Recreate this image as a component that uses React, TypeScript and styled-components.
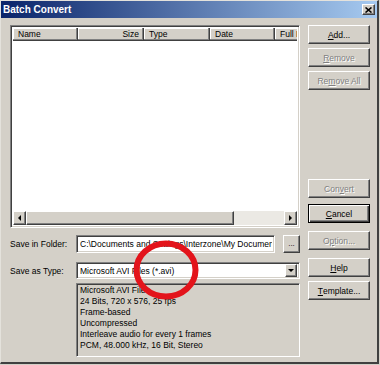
import styled, { createGlobalStyle } from "styled-components";

const GlobalStyle = createGlobalStyle`
  html, body {
    margin: 0;
    padding: 0;
    background: #d4d0c8;
  }
  body {
    font-family: "Liberation Sans", Arial, sans-serif;
    font-size: 8.5px;
    color: #000;
  }
  * {
    box-sizing: border-box;
  }
`;

const face = "#d4d0c8";
const raised = `
  border: 1px solid;
  border-color: #ffffff #404040 #404040 #ffffff;
  box-shadow: inset -1px -1px #808080, inset 1px 1px ${face};
  background: ${face};
`;
const sunken = `
  border: 1px solid;
  border-color: #808080 #ffffff #ffffff #808080;
  box-shadow: inset 1px 1px #404040, inset -1px -1px ${face};
`;

const Window = styled.div`
  position: relative;
  width: 379px;
  height: 364px;
  background: ${face};
  border-top: 1px solid #e4e2dc;
  border-left: 1px solid #e4e2dc;
  border-right: 2px solid #404040;
  border-bottom: 2px solid #404040;
  display: flex;
  flex-direction: column;
  overflow: hidden;
`;

const TitleBar = styled.div`
  height: 17px;
  display: flex;
  align-items: center;
  justify-content: space-between;
  padding: 0 2px 0 2px;
  background: linear-gradient(to right, #0a246a, #a6caf0);
`;

const Title = styled.span`
  color: #fff;
  font-weight: bold;
  font-size: 10px;
`;

const CloseButton = styled.div`
  ${raised}
  width: 13px;
  height: 11px;
  display: flex;
  align-items: center;
  justify-content: center;
`;

const Content = styled.div`
  flex: 1;
  display: flex;
  gap: 8px;
  padding: 7px 0 0 9px;
`;

const LeftCol = styled.div`
  width: 290px;
  display: flex;
  flex-direction: column;
`;

const ButtonCol = styled.div`
  width: 62px;
  display: flex;
  flex-direction: column;
`;

const ListView = styled.div`
  ${sunken}
  height: 203px;
  background: #fff;
  padding: 2px;
  display: flex;
  flex-direction: column;
`;

const HeaderRow = styled.div`
  height: 13px;
  display: flex;
  overflow: hidden;
`;

const HeaderCell = styled.div<{ $w: number; $right?: boolean }>`
  flex: 0 0 ${(p) => p.$w}px;
  height: 13px;
  background: ${face};
  border-right: 1px solid #404040;
  border-bottom: 1px solid #404040;
  box-shadow: inset -1px -1px #808080, inset 1px 1px #ffffff;
  display: flex;
  align-items: center;
  justify-content: ${(p) => (p.$right ? "flex-end" : "flex-start")};
  padding: 0 4px 0 5px;
  white-space: nowrap;
  overflow: hidden;
`;

const ListBody = styled.div`
  flex: 1;
`;

const ScrollBar = styled.div`
  height: 14px;
  display: flex;
  background: #ebe9e4;
`;

const ScrollArrow = styled.div`
  ${raised}
  width: 13px;
  height: 14px;
  display: flex;
  align-items: center;
  justify-content: center;
`;

const Thumb = styled.div`
  ${raised}
  width: 208px;
  height: 14px;
`;

const Track = styled.div`
  flex: 1;
`;

const Triangle = styled.span<{ $dir: "left" | "right" | "down" }>`
  width: 0;
  height: 0;
  border-style: solid;
  ${(p) =>
    p.$dir === "left"
      ? "border-width: 3.5px 3.5px 3.5px 0; border-color: transparent #000 transparent transparent;"
      : p.$dir === "right"
      ? "border-width: 3.5px 0 3.5px 3.5px; border-color: transparent transparent transparent #000;"
      : "border-width: 3.5px 3.5px 0 3.5px; border-color: #000 transparent transparent transparent;"}
`;

const FormRow = styled.div<{ $mt: number }>`
  display: flex;
  align-items: center;
  margin-top: ${(p) => p.$mt}px;
`;

const Label = styled.div`
  width: 66px;
  white-space: nowrap;
`;

const TextBox = styled.div<{ $w: number; $h: number }>`
  ${sunken}
  width: ${(p) => p.$w}px;
  height: ${(p) => p.$h}px;
  background: #fff;
  display: flex;
  align-items: center;
  padding: 0 2px 0 3px;
  white-space: nowrap;
  overflow: hidden;
`;

const BoxText = styled.span`
  flex: 1;
  overflow: hidden;
`;

const DropButton = styled.div`
  ${raised}
  flex: 0 0 12px;
  height: 13px;
  display: flex;
  align-items: center;
  justify-content: center;
`;

const SmallButton = styled.div`
  ${raised}
  width: 17px;
  height: 18px;
  margin-left: 8px;
  display: flex;
  align-items: flex-end;
  justify-content: center;
  padding-bottom: 4px;
  font-size: 8px;
`;

const InfoBox = styled.div`
  ${sunken}
  margin: 4px 0 0 66px;
  width: 224px;
  height: 74px;
  padding: 1px 3px;
  line-height: 10.9px;
  white-space: nowrap;
  overflow: hidden;
`;

const Button = styled.div<{ $mt: number; $disabled?: boolean; $default?: boolean }>`
  ${raised}
  margin-top: ${(p) => p.$mt}px;
  height: 19px;
  display: flex;
  align-items: center;
  justify-content: center;
  white-space: nowrap;
  color: ${(p) => (p.$disabled ? "#808080" : "#000")};
  text-shadow: ${(p) => (p.$disabled ? "1px 1px #ffffff" : "none")};
  ${(p) =>
    p.$default
      ? `border-color: #000; box-shadow: inset 1px 1px #ffffff, inset -1px -1px #404040, inset -2px -2px #808080;`
      : ""}
`;

const Annotation = styled.svg`
  position: absolute;
  left: 131px;
  top: 238px;
  pointer-events: none;
`;

const info = [
  "Microsoft AVI Files",
  "24 Bits, 720 x 576, 25 fps",
  "Frame-based",
  "Uncompressed",
  "Interleave audio for every 1 frames",
  "PCM, 48.000 kHz, 16 Bit, Stereo",
];

const folder = "C:\\Documents and Settings\\Interzone\\My Documents";

export default function App() {
  return (
    <>
      <GlobalStyle />
      <Window>
        <TitleBar>
          <Title>Batch Convert</Title>
          <CloseButton>
            <svg width="7" height="6" viewBox="0 0 7 6">
              <path d="M0.5 0.5 L6.5 5.5 M6.5 0.5 L0.5 5.5" stroke="#000" strokeWidth="1.6" />
            </svg>
          </CloseButton>
        </TitleBar>
        <Content>
          <LeftCol>
            <ListView>
              <HeaderRow>
                <HeaderCell $w={65}>Name</HeaderCell>
                <HeaderCell $w={66} $right>Size</HeaderCell>
                <HeaderCell $w={66}>Type</HeaderCell>
                <HeaderCell $w={65}>Date</HeaderCell>
                <HeaderCell $w={60}>Full Path</HeaderCell>
              </HeaderRow>
              <ListBody />
              <ScrollBar>
                <ScrollArrow>
                  <Triangle $dir="left" />
                </ScrollArrow>
                <Thumb />
                <Track />
                <ScrollArrow>
                  <Triangle $dir="right" />
                </ScrollArrow>
              </ScrollBar>
            </ListView>
            <FormRow $mt={7}>
              <Label>Save in Folder:</Label>
              <TextBox $w={199} $h={18}>
                <BoxText>{folder}</BoxText>
              </TextBox>
              <SmallButton>...</SmallButton>
            </FormRow>
            <FormRow $mt={9}>
              <Label>Save as Type:</Label>
              <TextBox $w={224} $h={17}>
                <BoxText>Microsoft AVI Files (*.avi)</BoxText>
                <DropButton>
                  <Triangle $dir="down" />
                </DropButton>
              </TextBox>
            </FormRow>
            <InfoBox>
              {info.map((line) => (
                <div key={line}>{line}</div>
              ))}
            </InfoBox>
          </LeftCol>
          <ButtonCol>
            <Button $mt={0}>
              <u>A</u>dd...
            </Button>
            <Button $mt={4} $disabled>
              <u>R</u>emove
            </Button>
            <Button $mt={4} $disabled>
              Re<u>m</u>ove All
            </Button>
            <Button $mt={89} $disabled>
              Con<u>v</u>ert
            </Button>
            <Button $mt={6} $default>
              <u>C</u>ancel
            </Button>
            <Button $mt={8} $disabled>
              O<u>p</u>tion...
            </Button>
            <Button $mt={8}>
              <u>H</u>elp
            </Button>
            <Button $mt={4}>
              <u>T</u>emplate...
            </Button>
          </ButtonCol>
        </Content>
        <Annotation width="68" height="62" viewBox="0 0 68 62">
          <ellipse cx="34" cy="31" rx="29.5" ry="26.5" fill="none" stroke="#e3141b" strokeWidth="6" />
        </Annotation>
      </Window>
    </>
  );
}
